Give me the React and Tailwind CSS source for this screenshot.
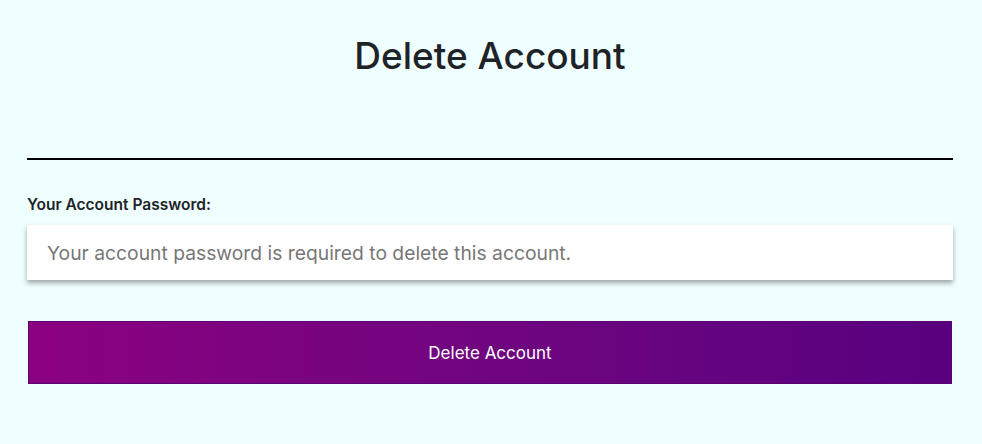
import React from 'react';

export default function App() {
    return (
        <div className="min-h-screen w-full bg-[#effefe] pl-[27px] pr-[29px] pt-[34px] text-[#1d2327]" style={{ fontFamily: 'Inter, "Noto Sans", sans-serif' }}>
            {/* Title */}
            <h1 className="text-center text-[37px] font-medium leading-[44px]">Delete Account</h1>

            {/* Divider */}
            <div className="mt-[80px] h-[2px] w-full bg-black"></div>

            {/* Password field */}
            <form className="mt-[36px] flex flex-col" onSubmit={e => e.preventDefault()}>
                <label className="text-[15.5px] font-semibold leading-[18px] text-[#1d2327]">Your Account Password:</label>
                <input
                    type="password"
                    placeholder="Your account password is required to delete this account."
                    className="mt-[11px] h-[55px] w-full bg-white px-[20px] text-[19.3px] text-[#333] placeholder:text-[#777] shadow-[0_3px_5px_rgba(0,0,0,0.35)] outline-none"
                />

                <button
                    type="submit"
                    className="mt-[41px] mx-px h-[63px] border border-[#5a0070] bg-gradient-to-r from-[#8a0080] to-[#58007f] pt-[2px] text-[17px] text-white"
                >
                    Delete Account
                </button>
            </form>
        </div>
    );
}
